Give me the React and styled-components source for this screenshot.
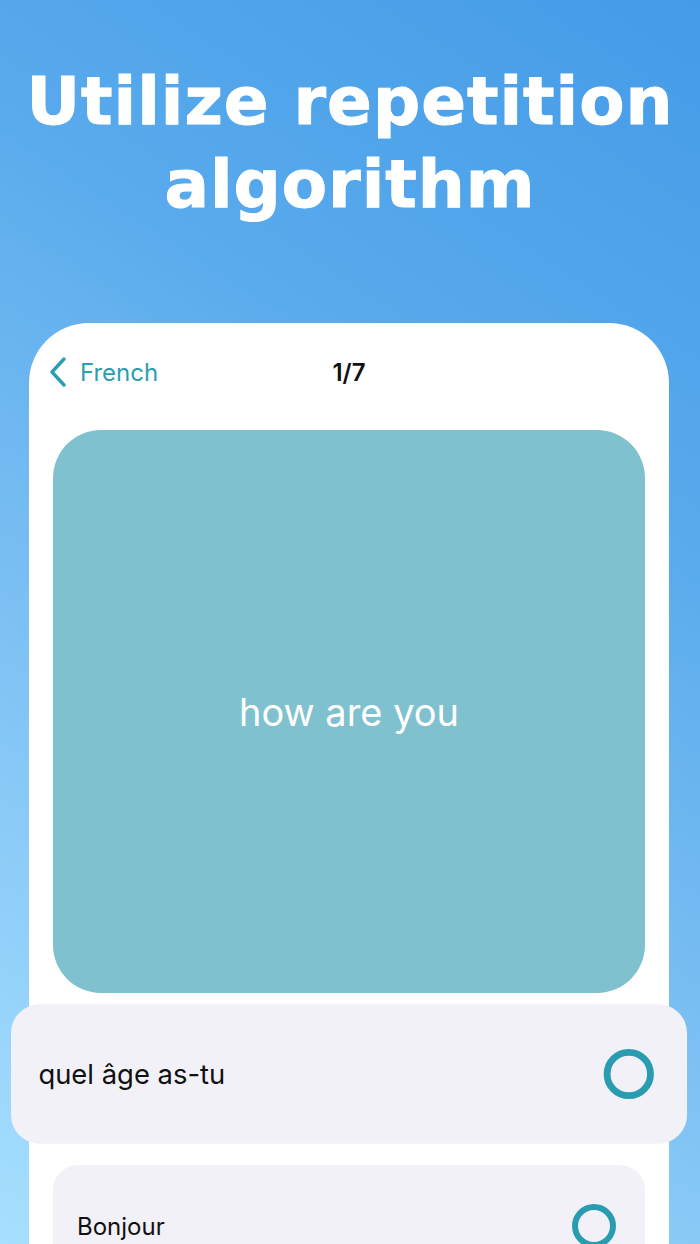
import React from "react";
import styled, { createGlobalStyle } from "styled-components";

const GlobalStyle = createGlobalStyle`
  html, body {
    margin: 0;
    padding: 0;
  }
  body {
    font-family: Inter, "Noto Sans", sans-serif;
    -webkit-font-smoothing: antialiased;
  }
`;

const Page = styled.div`
  width: 700px;
  height: 1244px;
  overflow: hidden;
  display: flex;
  flex-direction: column;
  align-items: center;
  background: linear-gradient(33deg, #a6e0ff 0%, #7cc0f3 38%, #58aaec 68%, #449be7 100%);
`;

const Headline = styled.h1`
  margin: 60px 0 0;
  font-family: "DejaVu Sans", sans-serif;
  font-weight: 700;
  font-size: 66px;
  line-height: 83px;
  letter-spacing: 1px;
  color: #ffffff;
  -webkit-text-stroke: 1px #ffffff;
  text-align: center;
`;

const Device = styled.div`
  margin: 97px 2px 0 0;
  width: 640px;
  flex: 1;
  background: #ffffff;
  border-radius: 60px 60px 0 0;
  padding: 27px 24px 0;
  box-sizing: border-box;
  display: flex;
  flex-direction: column;
`;

const NavBar = styled.div`
  position: relative;
  height: 44px;
  display: flex;
  align-items: center;
`;

const BackButton = styled.div`
  display: flex;
  align-items: center;
  gap: 13px;
  margin-left: -4px;
  color: #2b9eb1;
  font-size: 24px;
  font-weight: 400;
`;

const NavTitle = styled.div`
  position: absolute;
  left: 0;
  right: 0;
  text-align: center;
  font-size: 24px;
  font-weight: 600;
  color: #111111;
  pointer-events: none;
`;

const Flashcard = styled.div`
  margin-top: 36px;
  height: 563px;
  border-radius: 48px;
  background: #7fc1ce;
  display: flex;
  align-items: center;
  justify-content: center;
  color: #ffffff;
  font-size: 38px;
  font-weight: 400;
`;

const Options = styled.div`
  margin-top: 20px;
  display: flex;
  flex-direction: column;
  gap: 20px;
`;

const Option = styled.div`
  height: 122px;
  flex-shrink: 0;
  border-radius: 25px;
  background: #f1f1f7;
  display: flex;
  align-items: center;
  justify-content: space-between;
  padding: 0 29px 0 24px;
  box-sizing: border-box;
  font-size: 24px;
  color: #111111;
  transform: ${(p) => (p.$raised ? "scale(1.142)" : "none")};
  margin-bottom: ${(p) => (p.$raised ? "10px" : "0")};
`;

const Radio = styled.span`
  width: 44px;
  height: 44px;
  box-sizing: border-box;
  border-radius: 50%;
  border: 6px solid #2a9cb0;
`;

const Chevron = () => (
  <svg width="18" height="30" viewBox="0 0 18 30" fill="none">
    <path
      d="M15 2 L3 15 L15 28"
      stroke="#2b9eb1"
      strokeWidth="3.4"
      strokeLinecap="round"
      strokeLinejoin="round"
    />
  </svg>
);

const answers = [
  { text: "quel âge as-tu", raised: true },
  { text: "Bonjour", raised: false },
];

export default function App() {
  return (
    <>
      <GlobalStyle />
      <Page>
        <Headline>
          Utilize repetition
          <br />
          algorithm
        </Headline>
        <Device>
          <NavBar>
            <BackButton>
              <Chevron />
              French
            </BackButton>
            <NavTitle>1/7</NavTitle>
          </NavBar>
          <Flashcard>how are you</Flashcard>
          <Options>
            {answers.map((a) => (
              <Option key={a.text} $raised={a.raised}>
                <span>{a.text}</span>
                <Radio />
              </Option>
            ))}
          </Options>
        </Device>
      </Page>
    </>
  );
}
